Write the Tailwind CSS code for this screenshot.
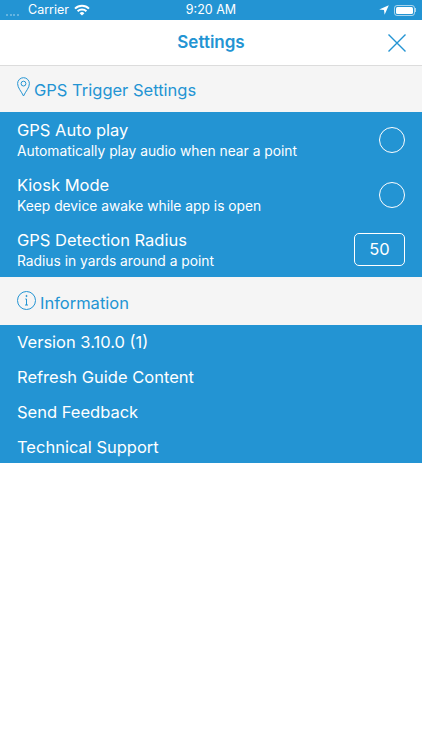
<!DOCTYPE html>
<html lang="en">
<head>
    <meta charset="UTF-8">
    <meta name="viewport" content="width=device-width, initial-scale=1.0">
    <title>Settings</title>
    <script src="https://cdn.jsdelivr.net/npm/@tailwindcss/browser@4"></script>
</head>
<body class="bg-white font-['Inter',sans-serif] overflow-hidden">
    <div class="w-[422px] h-[750px] bg-white">
        <!-- status bar -->
        <div class="h-[20px] bg-[#2394d3] text-white text-[12.5px] flex items-center justify-between relative pl-[6px] pr-[6px]">
            <div class="flex items-center gap-[5px] pt-[1px]">
                <div class="flex gap-[1.5px] items-end h-[8px] mt-[2px] w-[17px]">
                    <span class="w-[2px] h-[2px] rounded-full bg-white/40"></span>
                    <span class="w-[2px] h-[2px] rounded-full bg-white/40"></span>
                    <span class="w-[2px] h-[2px] rounded-full bg-white/40"></span>
                    <span class="w-[2px] h-[2px] rounded-full bg-white/40"></span>
                </div>
                <span>Carrier</span>
                <svg class="mb-[1px]" width="16" height="12" viewBox="0 0 16 12" fill="none" stroke="white" stroke-width="2">
                    <path d="M1 4.6 A10 10 0 0 1 15 4.6"/>
                    <path d="M3.6 7.2 A6.4 6.4 0 0 1 12.4 7.2"/>
                    <path d="M8 11.5 L5.6 9.2 A3.4 3.4 0 0 1 10.4 9.2 Z" fill="white" stroke="none"/>
                </svg>
            </div>
            <span class="absolute left-0 right-0 text-center pt-[1px]">9:20 AM</span>
            <div class="flex items-center gap-[5px]">
                <svg width="10" height="10" viewBox="0 0 10 10" fill="white"><path d="M9.8 0.2 L0.2 4.4 L5 5 L5.6 9.8 Z"/></svg>
                <div class="flex items-center">
                    <div class="w-[21px] h-[11px] rounded-[3px] border border-white/60 p-[1px]">
                        <div class="w-full h-full bg-white rounded-[1.5px]"></div>
                    </div>
                    <div class="w-[1px] h-[4px] bg-white/60"></div>
                </div>
            </div>
        </div>

        <!-- nav -->
        <div class="h-[46px] bg-white border-b border-[#dcdcdc] flex items-center justify-center relative">
            <h1 class="text-[17px] font-semibold text-[#2394d3] mt-[1px]">Settings</h1>
            <svg class="absolute right-[16px] top-[14px]" width="18" height="18" viewBox="0 0 18 18" stroke="#2394d3" stroke-width="1.4" fill="none">
                <path d="M0.5 0.5 L17.5 17.5 M17.5 0.5 L0.5 17.5"/>
            </svg>
        </div>

        <!-- gps header -->
        <div class="h-[46px] bg-[#f5f5f5] flex items-center pl-[17px] gap-[4px] text-[#2394d3]">
            <svg class="mb-[5px]" width="13" height="20" viewBox="0 0 13 20" fill="none" stroke="#2394d3" stroke-width="1">
                <path d="M6.5 19 C4.5 14.5 0.6 11 0.6 6.6 A5.9 5.9 0 0 1 12.4 6.6 C12.4 11 8.5 14.5 6.5 19 Z"/>
                <circle cx="6.5" cy="6.6" r="2.4"/>
            </svg>
            <span class="text-[16.5px] mt-[3px]">GPS Trigger Settings</span>
        </div>

        <!-- gps rows -->
        <div class="bg-[#2394d3] text-white">
            <div class="h-[55px] flex items-center justify-between px-[17px]">
                <div class="mt-[2px]">
                    <p class="text-[16.5px] leading-[21px]">GPS Auto play</p>
                    <p class="text-[13.8px] leading-[21px]">Automatically play audio when near a point</p>
                </div>
                <div class="w-[26px] h-[26px] rounded-full border border-white"></div>
            </div>
            <div class="h-[55px] flex items-center justify-between px-[17px]">
                <div class="mt-[2px]">
                    <p class="text-[16.5px] leading-[21px]">Kiosk Mode</p>
                    <p class="text-[13.8px] leading-[21px]">Keep device awake while app is open</p>
                </div>
                <div class="w-[26px] h-[26px] rounded-full border border-white"></div>
            </div>
            <div class="h-[55px] flex items-center justify-between px-[17px]">
                <div class="mt-[2px]">
                    <p class="text-[16.5px] leading-[21px]">GPS Detection Radius</p>
                    <p class="text-[13.8px] leading-[21px]">Radius in yards around a point</p>
                </div>
                <div class="w-[51px] h-[33px] rounded-[5px] border border-white flex items-center justify-center text-[16.5px]">50</div>
            </div>
        </div>

        <!-- information header -->
        <div class="h-[48px] bg-[#f5f5f5] flex items-center pl-[17px] gap-[4px] text-[#2394d3]">
            <svg class="mb-[2px]" width="19" height="19" viewBox="0 0 19 19" fill="none" stroke="#2394d3" stroke-width="1">
                <circle cx="9.5" cy="9.5" r="9"/>
                <path d="M9.5 8 V14 M8 14 H11 M8.3 8 H9.5" />
                <circle cx="9.5" cy="5" r="0.6" fill="#2394d3"/>
            </svg>
            <span class="text-[16.5px] mt-[4px]">Information</span>
        </div>

        <!-- info rows -->
        <div class="bg-[#2394d3] text-white text-[16.5px] leading-[35px] h-[138px] pl-[17px]">
            <p>Version 3.10.0 (1)</p>
            <p>Refresh Guide Content</p>
            <p>Send Feedback</p>
            <p>Technical Support</p>
        </div>
    </div>
</body>
</html>
